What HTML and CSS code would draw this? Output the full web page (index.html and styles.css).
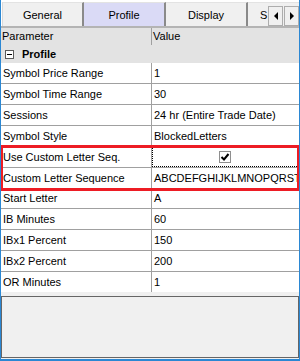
FILE: index.html
```html
<!DOCTYPE html>
<html>
<head>
<meta charset="utf-8">
<link rel="stylesheet" href="styles.css">
</head>
<body>
<div class="window">
  <div class="tabstrip">
    <div class="tab">General</div>
    <div class="tab selected">Profile</div>
    <div class="tab">Display</div>
    <div class="tab last">S</div>
    <div class="scroll">
      <div class="sbtn"><span class="tri left"></span></div>
      <div class="sbtn"><span class="tri right"></span></div>
    </div>
  </div>
  <div class="band"></div>
  <div class="grid">
    <div class="head">
      <div class="hcell name">Parameter</div>
      <div class="hcell">Value</div>
    </div>
    <div class="category">
      <span class="minus"></span>
      <span class="cat-label">Profile</span>
    </div>
    <div class="row"><div class="cell name">Symbol Price Range</div><div class="cell">1</div></div>
    <div class="row"><div class="cell name">Symbol Time Range</div><div class="cell">30</div></div>
    <div class="row"><div class="cell name">Sessions</div><div class="cell">24 hr (Entire Trade Date)</div></div>
    <div class="row"><div class="cell name">Symbol Style</div><div class="cell">BlockedLetters</div></div>
    <div class="highlight">
      <div class="row"><div class="cell name">Use Custom Letter Seq.</div><div class="cell focus"><span class="check"><svg width="10" height="10" viewBox="0 0 10 10"><path d="M1.5 5 L4 7.5 L8.5 2" fill="none" stroke="#000" stroke-width="2"/></svg></span></div></div>
      <div class="row"><div class="cell name">Custom Letter Sequence</div><div class="cell">ABCDEFGHIJKLMNOPQRSTUVWXYZ</div></div>
    </div>
    <div class="row"><div class="cell name">Start Letter</div><div class="cell">A</div></div>
    <div class="row"><div class="cell name">IB Minutes</div><div class="cell">60</div></div>
    <div class="row"><div class="cell name">IBx1 Percent</div><div class="cell">150</div></div>
    <div class="row"><div class="cell name">IBx2 Percent</div><div class="cell">200</div></div>
    <div class="row"><div class="cell name">OR Minutes</div><div class="cell">1</div></div>
  </div>
  <div class="desc"></div>
</div>
</body>
</html>
```

FILE: styles.css
```css
html, body {
  margin: 0;
  padding: 0;
  background: #ffffff;
}
body {
  font-family: "Liberation Sans", Arial, sans-serif;
  font-size: 11px;
  color: #000;
}
.window {
  width: 300px;
  height: 361px;
  box-sizing: border-box;
  border-left: 1px solid #2b87d3;
  border-right: 1px solid #2b87d3;
  border-bottom: 2px solid #2b87d3;
  background: #f0f0f0;
  display: flex;
  flex-direction: column;
  overflow: hidden;
}
.tabstrip {
  position: relative;
  height: 26px;
  box-sizing: border-box;
  padding-top: 2px;
  padding-left: 1px;
  background: #ffffff;
  display: flex;
}
.tab {
  width: 80px;
  box-sizing: content-box;
  height: 24px;
  line-height: 24px;
  text-align: center;
  background: #f0f0f0;
  border-right: 2px solid #8a8a8a;
  border-top: 1px solid #e3e3e3;
  box-sizing: border-box;
  flex: none;
}
.tab:first-child {
  width: 82px;
  border-left: 1px solid #dadada;
}
.tab.selected {
  width: 82px;
  background: #dadaf6;
}
.tab.selected, .tab:nth-child(3) {
  width: 82px;
}
.tab.last {
  flex: 1;
  text-align: left;
  padding-left: 12px;
  border-right: none;
}
.scroll {
  position: absolute;
  right: 0;
  top: 6px;
  display: flex;
  gap: 1px;
}
.sbtn {
  width: 15px;
  height: 20px;
  box-sizing: border-box;
  border: 1px solid #adadad;
  background: #f0f0f0;
  display: flex;
  align-items: center;
  justify-content: center;
}
.tri {
  width: 0;
  height: 0;
  border-top: 4px solid transparent;
  border-bottom: 4px solid transparent;
}
.tri.left { border-right: 4px solid #000; }
.tri.right { border-left: 4px solid #000; }
.band {
  height: 2px;
  background: #b4b4b4;
}
.grid {
  display: flex;
  flex-direction: column;
}
.head {
  display: grid;
  grid-template-columns: 151px 1fr;
  height: 17px;
  background: #e3e3e3;
}
.hcell {
  line-height: 17px;
  padding-left: 1px;
}
.hcell.name {
  border-right: 1px solid #a0a0a0;
}
.category {
  height: 18px;
  background: #e3e3e3;
  display: flex;
  align-items: center;
  padding-left: 4px;
}
.minus {
  width: 9px;
  height: 9px;
  box-sizing: border-box;
  border: 1px solid #5a5a5a;
  background: #fff;
  position: relative;
  margin-right: 8px;
}
.minus::after {
  content: "";
  position: absolute;
  left: 1px;
  right: 1px;
  top: 3px;
  height: 1px;
  background: #000;
}
.cat-label {
  font-weight: bold;
}
.row {
  display: grid;
  grid-template-columns: 151px 1fr;
  height: 21px;
  box-sizing: border-box;
  border-bottom: 1px solid #a0a0a0;
  background: #fff;
}
.row:last-child {
  border-bottom: none;
  height: 20px;
}
.cell {
  line-height: 20px;
  padding-left: 2px;
  white-space: nowrap;
  overflow: hidden;
}
.cell.name {
  border-right: 1px solid #a0a0a0;
}
.cell.focus {
  outline: 1px dotted #000;
  outline-offset: -1px;
  display: flex;
  align-items: center;
  justify-content: center;
  padding-left: 0;
}
.check {
  width: 12px;
  height: 12px;
  box-sizing: border-box;
  border: 1px solid #8f8f8f;
  background: #fff;
  display: flex;
  align-items: center;
  justify-content: center;
  margin-left: -2px;
}
.highlight {
  position: relative;
}
.highlight::after {
  content: "";
  position: absolute;
  left: -1px;
  right: -1px;
  top: -2px;
  bottom: -3px;
  border: 3px solid #ed1c24;
  pointer-events: none;
}
.desc {
  margin-top: 4px;
  height: 62px;
  box-sizing: border-box;
  border: 1px solid #666666;
  background: #f0f0f0;
}
```
